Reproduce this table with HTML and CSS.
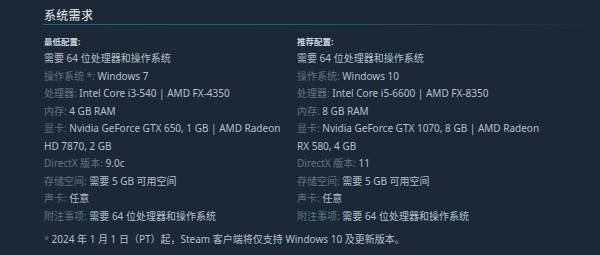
FILE: index.html
```html
<!DOCTYPE html>
<html lang="zh-CN">
<head>
<meta charset="utf-8">
<link rel="stylesheet" href="styles.css">
</head>
<body>
<div class="page">
  <h2 class="title">系统需求</h2>
  <div class="cols">
    <div class="col">
      <div class="head">最低配置:</div>
      <ul class="list">
        <li>需要 64 位处理器和操作系统</li>
        <li><span class="lab">操作系统 *:</span> Windows 7</li>
        <li><span class="lab">处理器:</span> Intel Core i3-540 | AMD FX-4350</li>
        <li><span class="lab">内存:</span> 4 GB RAM</li>
        <li><span class="lab">显卡:</span> Nvidia GeForce GTX 650, 1 GB | AMD Radeon HD 7870, 2 GB</li>
        <li><span class="lab">DirectX 版本:</span> 9.0c</li>
        <li><span class="lab">存储空间:</span> 需要 5 GB 可用空间</li>
        <li><span class="lab">声卡:</span> 任意</li>
        <li><span class="lab">附注事项:</span> 需要 64 位处理器和操作系统</li>
      </ul>
    </div>
    <div class="col">
      <div class="head">推荐配置:</div>
      <ul class="list">
        <li>需要 64 位处理器和操作系统</li>
        <li><span class="lab">操作系统:</span> Windows 10</li>
        <li><span class="lab">处理器:</span> Intel Core i5-6600 | AMD FX-8350</li>
        <li><span class="lab">内存:</span> 8 GB RAM</li>
        <li><span class="lab">显卡:</span> Nvidia GeForce GTX 1070, 8 GB | AMD Radeon RX 580, 4 GB</li>
        <li><span class="lab">DirectX 版本:</span> 11</li>
        <li><span class="lab">存储空间:</span> 需要 5 GB 可用空间</li>
        <li><span class="lab">声卡:</span> 任意</li>
        <li><span class="lab">附注事项:</span> 需要 64 位处理器和操作系统</li>
      </ul>
    </div>
  </div>
  <p class="note"><span class="star">*</span> 2024 年 1 月 1 日（PT）起，Steam 客户端将仅支持 Windows 10 及更新版本。</p>
</div>
</body>
</html>
```
FILE: styles.css
```css
html, body {
  margin: 0;
  padding: 0;
  background: #1b2838;
}
body {
  font-family: "Noto Sans", "Noto Sans CJK SC", sans-serif;
  width: 600px;
  height: 255px;
  overflow: hidden;
}
.page {
  padding: 8px 0 0 44px;
}
.title {
  margin: 0 0 0 -1px;
  padding: 0 0 0 1px;
  font-size: 12px;
  font-weight: normal;
  color: #eef2f5;
  line-height: 16px;
  height: 16px;
  letter-spacing: 0.3px;
  border-bottom: 1px solid transparent;
  border-image: linear-gradient(to right, #35607d 0%, #2d5069 60%, #1b2838 100%) 1;
}
.cols {
  display: grid;
  grid-template-columns: 253px 253px;
  margin-top: 9px;
}
.col {
  padding-right: 2px;
}
.head {
  font-size: 8.5px;
  font-weight: bold;
  color: #c6d4df;
  line-height: 16px;
}
.list {
  list-style: none;
  margin: 0;
  padding: 0;
}
.list li {
  font-size: 10px;
  line-height: 17.5px;
  color: #b4c0cb;
}
.lab {
  color: #637383;
}
.note {
  margin: 6px 0 0;
  font-size: 10px;
  line-height: 17px;
  color: #b4c0cb;
}
.star {
  color: #637383;
  font-size: 9px;
}
```
